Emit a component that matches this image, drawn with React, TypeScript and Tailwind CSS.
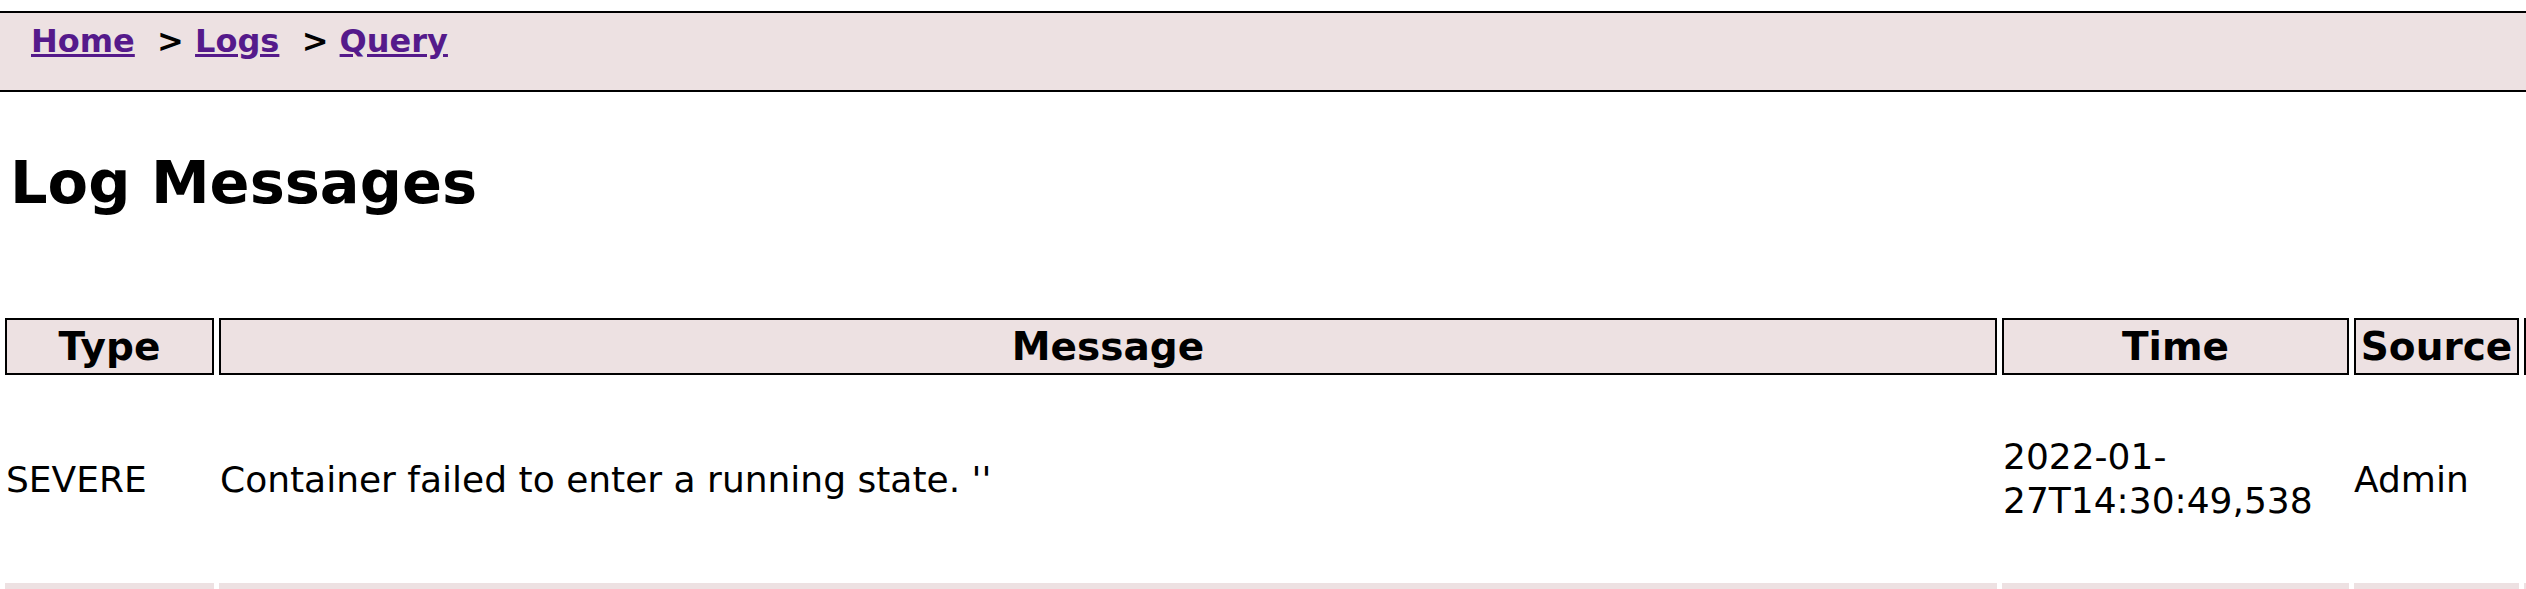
export default function App() {
  return (
    <div className="w-[2526px] h-[589px] overflow-hidden bg-white text-black font-['DejaVu_Sans',sans-serif] leading-[normal] text-[36px]">
      <div className="mt-[11px] h-[81px] border-y-2 border-black bg-[#ede1e2] pl-[31px] pt-[9px] text-[32px] font-bold whitespace-pre">
        <a href="#" className="text-[#551a8b] underline">Home</a>
        <span>{"\u00a0 > "}</span>
        <a href="#" className="text-[#551a8b] underline">Logs</a>
        <span>{"\u00a0 > "}</span>
        <a href="#" className="text-[#551a8b] underline">Query</a>
      </div>

      <h1 className="mt-[56px] pl-[10px] text-[59px] font-bold">Log Messages</h1>

      <table className="mt-[96px] table-fixed border-separate border-spacing-[5px] w-[2869px]">
        <thead>
          <tr>
            <th className="w-[209px] border-2 border-black bg-[#ede1e2] px-[2px] py-[4px] text-[39px] font-bold">Type</th>
            <th className="w-[1778px] border-2 border-black bg-[#ede1e2] px-[2px] py-[4px] text-[39px] font-bold">Message</th>
            <th className="w-[347px] border-2 border-black bg-[#ede1e2] px-[2px] py-[4px] text-[39px] font-bold">Time</th>
            <th className="w-[165px] border-2 border-black bg-[#ede1e2] px-0 py-[4px] text-[39px] font-bold">Source</th>
            <th className="w-[340px] border-2 border-black bg-[#ede1e2] px-[2px] py-[4px] text-[39px] font-bold">Details</th>
          </tr>
        </thead>
        <tbody>
          <tr className="h-[198px]">
            <td className="px-[1px] align-middle">SEVERE</td>
            <td className="px-[1px] align-middle">Container failed to enter a running state. ''</td>
            <td className="px-[1px] align-middle leading-[44px]">2022-01-27T14:30:49,538</td>
            <td className="px-0 align-middle">Admin</td>
            <td className="px-[2px] align-middle pt-[20px] text-[#c8843a]">(</td>
          </tr>
          <tr className="h-[198px]">
            <td className="bg-[#ede1e2]"></td>
            <td className="bg-[#ede1e2]"></td>
            <td className="bg-[#ede1e2]"></td>
            <td className="bg-[#ede1e2]"></td>
            <td className="bg-[#ede1e2]"></td>
          </tr>
        </tbody>
      </table>
    </div>
  )
}
